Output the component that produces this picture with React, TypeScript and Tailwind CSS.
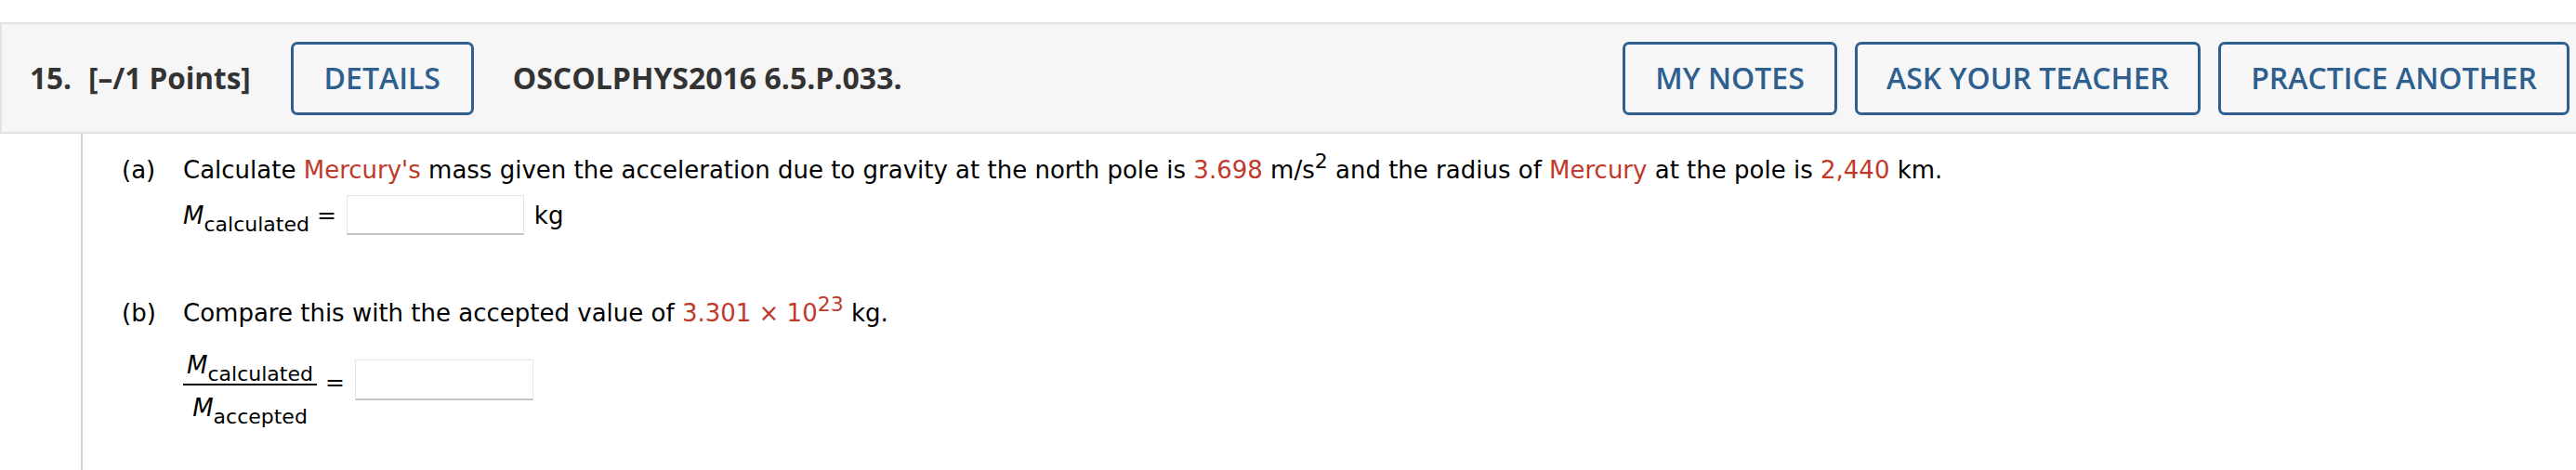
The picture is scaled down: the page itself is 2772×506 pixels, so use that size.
import React from "react";

const red = "text-[#c0392b]";

function Sub({ children }: { children: React.ReactNode }) {
  return <span className="text-[22px] leading-[0] align-[-8px] not-italic">{children}</span>;
}

function Sup({ children }: { children: React.ReactNode }) {
  return <span className="text-[22px] leading-[0] align-[11px]">{children}</span>;
}

function HeaderButton({ label, w }: { label: string; w: string }) {
  return (
    <button
      className={`${w} h-[79px] shrink-0 rounded-[7px] border-[3px] border-[#2e5f8f] bg-[#f7f7f7] text-[32px] font-semibold text-[#2e5f8f] flex items-center justify-center`}
      style={{ fontFamily: '"Open Sans", sans-serif' }}
    >
      {label}
    </button>
  );
}

export default function App() {
  return (
    <div className="w-[2772px] h-[506px] overflow-hidden bg-white pt-[24px] flex flex-col">
      {/* Header */}
      <div
        className="h-[120px] shrink-0 border-y-2 border-l-2 border-[#e2e2e2] bg-[#f6f6f6] flex items-center pl-[30px] pr-[7px] text-[#333333]"
        style={{ fontFamily: '"Open Sans", sans-serif' }}
      >
        <span className="text-[31.5px] font-bold">15.</span>
        <span className="text-[31.5px] font-bold ml-[18px]">[–/1 Points]</span>
        <div className="ml-[43px]">
          <HeaderButton label="DETAILS" w="w-[197px]" />
        </div>
        <span className="ml-[42px] text-[32px] font-bold">OSCOLPHYS2016 6.5.P.033.</span>
        <div className="ml-auto flex gap-[19px]">
          <HeaderButton label="MY NOTES" w="w-[231px]" />
          <HeaderButton label="ASK YOUR TEACHER" w="w-[372px]" />
          <HeaderButton label="PRACTICE ANOTHER" w="w-[378px]" />
        </div>
      </div>

      {/* Body */}
      <div
        className="ml-[87px] flex-1 border-l-2 border-[#d6d6d6] pl-[42px] pt-[21px] text-[26px] text-black"
        style={{ fontFamily: '"DejaVu Sans", Verdana, sans-serif' }}
      >
        {/* (a) */}
        <div className="flex items-baseline leading-[36px]">
          <span className="w-[66px] shrink-0">(a)</span>
          <span>
            Calculate <span className={red}>Mercury's</span> mass given the acceleration due to gravity at the north pole is{" "}
            <span className={red}>3.698</span> m/s<Sup>2</Sup> and the radius of <span className={red}>Mercury</span> at the pole is{" "}
            <span className={red}>2,440</span> km.
          </span>
        </div>
        <div className="flex items-center ml-[66px] mt-[9px]">
          <span className="leading-[36px]">
            <span className="italic">M</span>
            <Sub>calculated</Sub>
          </span>
          <span className="ml-[8px] text-[25px]">=</span>
          <div className="ml-[11px] w-[191px] h-[43px] bg-white border border-[#e4e4e4] border-b-[2px] border-b-[#c4c4c4]" />
          <span className="ml-[11px] leading-[36px]">kg</span>
        </div>

        {/* (b) */}
        <div className="flex items-baseline leading-[36px] mt-[66px]">
          <span className="w-[66px] shrink-0">(b)</span>
          <span>
            Compare this with the accepted value of{" "}
            <span className={red}>
              3.301 × 10<Sup>23</Sup>
            </span>{" "}
            kg.
          </span>
        </div>
        <div className="flex items-start ml-[66px] mt-[22px]">
          <div className="flex flex-col items-center">
            <span className="leading-[32px] pb-[4px]">
              <span className="italic">M</span>
              <Sub>calculated</Sub>
            </span>
            <div className="w-[144px] h-[2px] bg-black" />
            <span className="leading-[32px] pt-[8px] pb-[6px]">
              <span className="italic">M</span>
              <Sub>accepted</Sub>
            </span>
          </div>
          <span className="ml-[9px] mt-[17px] leading-[36px] text-[25px]">=</span>
          <div className="ml-[11px] mt-[10px] w-[192px] h-[44px] bg-white border border-[#e4e4e4] border-b-[2px] border-b-[#c4c4c4]" />
        </div>
      </div>
    </div>
  );
}
